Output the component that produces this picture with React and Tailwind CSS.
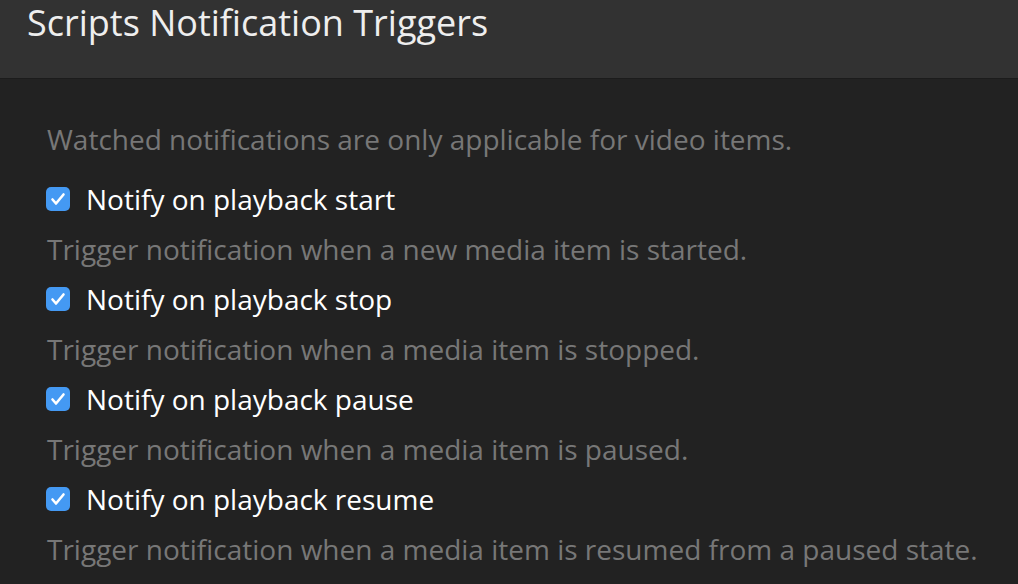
import React from 'react';

const triggers = [
  {
    label: 'Notify on playback start',
    desc: 'Trigger notification when a new media item is started.',
  },
  {
    label: 'Notify on playback stop',
    desc: 'Trigger notification when a media item is stopped.',
  },
  {
    label: 'Notify on playback pause',
    desc: 'Trigger notification when a media item is paused.',
  },
  {
    label: 'Notify on playback resume',
    desc: 'Trigger notification when a media item is resumed from a paused state.',
  },
];

const Checkbox = () => (
  <span className="w-[24px] h-[24px] rounded-[5px] bg-[#4499f3] flex items-center justify-center shrink-0">
    <svg viewBox="0 0 24 24" className="w-[24px] h-[24px]" fill="none" stroke="white" strokeWidth="2.6" strokeLinecap="round" strokeLinejoin="round">
      <path d="M6.5 12.5 L10 16.5 L17.5 7.5" />
    </svg>
  </span>
);

export default function App() {
  return (
    <div className="w-[1018px] h-[584px] overflow-hidden bg-[#222222]" style={{ fontFamily: '"Open Sans", sans-serif' }}>
      {/* Header */}
      <div className="h-[79px] bg-[#323232] border-b border-[#1c1c1c] px-[27px]">
        <h1 className="text-[36px] leading-[45px] text-[#eeeeee] font-normal whitespace-nowrap">Scripts Notification Triggers</h1>
      </div>

      {/* Body */}
      <div className="px-[47px] pt-[35px]">
        <p className="text-[28px] leading-[50px] text-[#777777] mb-[10px] whitespace-nowrap">
          Watched notifications are only applicable for video items.
        </p>
        {triggers.map((t) => (
          <div key={t.label}>
            <label className="flex items-center gap-[16px] h-[50px] -ml-[1px]">
              <Checkbox />
              <span className="text-[28px] leading-[50px] text-white whitespace-nowrap">{t.label}</span>
            </label>
            <p className="text-[28px] leading-[50px] text-[#777777] whitespace-nowrap">{t.desc}</p>
          </div>
        ))}
      </div>
    </div>
  );
}
